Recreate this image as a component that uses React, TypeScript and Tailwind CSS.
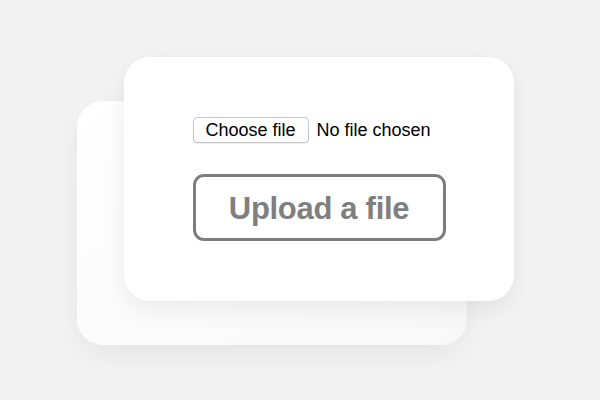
export default function App() {
  return (
    <div className="flex h-[400px] w-full items-center justify-center bg-[#f3f3f3] pt-[2px]" style={{ fontFamily: '"Liberation Sans", Arial, sans-serif' }}>
      <div className="mr-[9px] grid">
        <div className="col-start-1 row-start-1 mt-[44px] h-[244px] w-[390px] rounded-[26px] bg-gradient-to-br from-white to-[#f8f8f8] shadow-[0_10px_30px_rgba(0,0,0,0.06)]" />
        <div className="col-start-1 row-start-1 ml-[47px] mb-[44px] flex h-[244px] w-[390px] flex-col items-center rounded-[26px] bg-white pt-[60px] shadow-[0_8px_24px_rgba(0,0,0,0.07)]">
          <div className="flex flex-col items-start">
            <div className="flex items-center">
              <button className="h-[26px] rounded-[4px] border border-[#c8c8c8] bg-white px-[12px] text-[18px] leading-none text-black shadow-[0_1px_1px_rgba(0,0,0,0.08)]">
                Choose file
              </button>
              <span className="ml-[8px] text-[18px] leading-none text-black">No file chosen</span>
            </div>
            <button className="mt-[31px] flex h-[67px] w-[253px] items-center justify-center rounded-[11px] border-[3px] border-[#7d7d7d] bg-white pt-[4px] text-[31px] font-bold tracking-[-0.3px] text-[#7f7f7f]">
              Upload a file
            </button>
          </div>
        </div>
      </div>
    </div>
  );
}
